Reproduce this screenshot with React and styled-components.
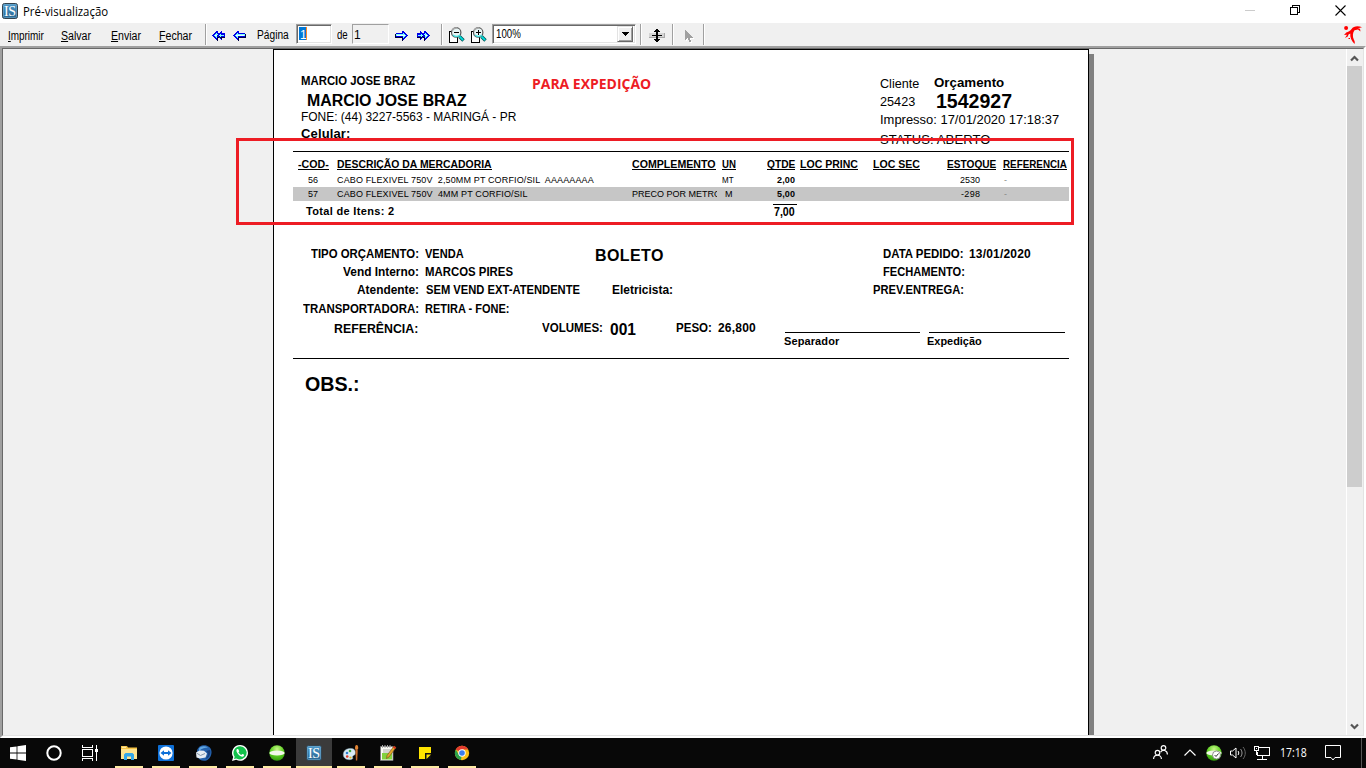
import React from 'react';
import styled, { createGlobalStyle, css } from 'styled-components';

const GlobalStyle = createGlobalStyle`
  * { box-sizing: border-box; }
  body { margin: 0; overflow: hidden; background: #f0f0f0; }
  svg { display: block; flex: none; overflow: visible; }
`;

const ARIAL = '"Liberation Sans", Arial, sans-serif';
const UI = '"Open Sans", "Noto Sans", sans-serif';

/* ---------- text fitted to a printed width ---------- */

const canvas = document.createElement('canvas').getContext('2d');

function measure(text, weight, size, family, width) {
  canvas.font = `${weight} ${size}px ${family}`;
  const m = canvas.measureText(text);
  const ink = m.actualBoundingBoxLeft + m.actualBoundingBoxRight;
  if (text.length < 2) return { marginLeft: `${m.actualBoundingBoxLeft.toFixed(2)}px` };
  if (ink > width) {
    const scale = width / ink;
    return {
      transform: `scaleX(${scale.toFixed(4)})`,
      marginLeft: `${(m.actualBoundingBoxLeft * scale).toFixed(2)}px`,
    };
  }
  return {
    letterSpacing: `${((width - ink) / (text.length - 1)).toFixed(3)}px`,
    marginLeft: `${m.actualBoundingBoxLeft.toFixed(2)}px`,
  };
}

const Label = styled.span`
  display: block;
  flex: none;
  white-space: pre;
  font-family: ${(p) => p.$family};
  font-size: ${(p) => p.$size}px;
  font-weight: ${(p) => p.$weight};
  line-height: ${(p) => p.$line}px;
  height: ${(p) => p.$line}px;
  width: ${(p) => p.$w}px;
  margin-left: ${(p) => p.$ml || 0}px;
  margin-top: ${(p) => p.$mt || 0}px;
  color: ${(p) => p.$color || '#000'};
  ${(p) => p.$clip && css`overflow: hidden; width: ${p.$clip}px;`}
  ${(p) => p.$underline && css`border-bottom: 1px solid #000;`}
`;

const Ink = styled.span`
  display: block;
  width: max-content;
  transform-origin: 0 0;
`;

const Hot = styled.span`
  text-decoration: underline;
  text-underline-offset: 1px;
  text-decoration-thickness: 1px;
`;

function Text({ children, w, size = 12, bold, weight, family = ARIAL, ml, mt, color, clip, underline, hot, line }) {
  const wt = weight || (bold ? 700 : 400);
  const lh = line || Math.round(size * 0.905) + Math.round(size * 0.212);
  return (
    <Label
      $w={w} $size={size} $weight={wt} $family={family} $ml={ml} $mt={mt}
      $line={lh} $color={color} $clip={clip} $underline={underline}
    >
      <Ink style={measure(children, wt, size, family, w)}>
        {hot ? <><Hot>{children[0]}</Hot>{children.slice(1)}</> : children}
      </Ink>
    </Label>
  );
}

/* ---------- window frame ---------- */

const Desktop = styled.div`
  width: 1366px;
  height: 768px;
  display: flex;
  flex-direction: column;
  overflow: hidden;
  background: #f0f0f0;
`;

const TitleBar = styled.header`
  height: 23px;
  flex: none;
  display: flex;
  align-items: flex-start;
  padding: 3px 20px 0 2px;
  background: #fff;
`;

const WindowButtons = styled.div`
  display: flex;
  margin-left: auto;
  gap: 35px;
  padding-top: 2px;
`;

const Toolbar = styled.nav`
  height: 23px;
  flex: none;
  display: flex;
  align-items: flex-start;
  padding: 1px 4px 0 9px;
  background: #f0f0f0;
`;

const Separator = styled.i`
  width: 2px;
  height: 21px;
  flex: none;
  margin-left: ${(p) => p.$ml}px;
  background: linear-gradient(90deg, #a0a0a0 50%, #fff 50%);
`;

const PageInput = styled.div`
  width: 36px;
  height: 20px;
  flex: none;
  margin-left: 7px;
  padding: 1px;
  background: #fff;
  border: 1px solid;
  border-color: #a0a0a0 #fff #fff #a0a0a0;
  box-shadow: inset 1px 1px #696969, inset -1px -1px #e3e3e3;
`;

const Selected = styled.div`
  width: 8px;
  height: 13px;
  display: flex;
  margin: 1px 0 0 1px;
  padding-left: 1px;
  background: #0078d7;
  border-right: 1px solid #ff8728;
`;

const PageTotal = styled.div`
  width: 37px;
  height: 20px;
  flex: none;
  margin-left: 4px;
  padding: 3px 0 0 1px;
  border: 1px solid;
  border-color: #a0a0a0 #fff #fff #a0a0a0;
`;

const Combo = styled.div`
  width: 144px;
  height: 20px;
  flex: none;
  margin-left: 5px;
  display: flex;
  justify-content: space-between;
  padding: 2px 2px 2px 3px;
  background: #fff;
  border: 1px solid;
  border-color: #a0a0a0 #fff #fff #a0a0a0;
  box-shadow: inset 1px 1px #696969, inset -1px -1px #e3e3e3;
`;

const ComboButton = styled.div`
  width: 16px;
  height: 16px;
  margin-top: -1px;
  display: flex;
  align-items: center;
  justify-content: center;
  background: #f0f0f0;
  border: 1px solid;
  border-color: #e3e3e3 #696969 #696969 #e3e3e3;
  box-shadow: inset 1px 1px #fff, inset -1px -1px #a0a0a0;
`;

const Glyph = styled.div`
  flex: none;
  margin-left: ${(p) => p.$ml || 0}px;
  margin-top: ${(p) => p.$mt || 0}px;
`;

const Viewport = styled.main`
  position: relative;
  height: 692px;
  flex: none;
  display: flex;
  border: 2px solid;
  border-color: #a0a0a0 #fff #fff #a0a0a0;
  overflow: hidden;
`;

const Inset = styled.div`
  flex: 1;
  display: flex;
  padding-left: 270px;
  border: 1px solid;
  border-color: #696969 #e3e3e3 #e3e3e3 #696969;
  overflow: hidden;
`;

const Sheet = styled.article`
  width: 816px;
  height: 760px;
  flex: none;
  display: flex;
  flex-direction: column;
  background: #fff;
  border: 1px solid #000;
`;

const SheetShadow = styled.div`
  width: 5px;
  height: 760px;
  margin-top: 5px;
  background: #808080;
`;

const Scrollbar = styled.aside`
  width: 17px;
  flex: none;
  margin-left: auto;
  display: flex;
  flex-direction: column;
  align-items: flex-start;
  padding-top: 6px;
  border-left: 1px solid #fff;
`;

const Thumb = styled.div`
  width: 15px;
  height: 421px;
  margin: 4px 0 236px;
  background: #cdcdcd;
`;

/* ---------- report ---------- */

const Head = styled.section`
  height: 101px;
  flex: none;
  display: flex;
  padding: 24px 0 0 27px;
`;

const Column = styled.div`
  display: flex;
  flex-direction: column;
  width: ${(p) => p.$w}px;
  flex: none;
`;

const Line = styled.div`
  display: flex;
  align-items: flex-start;
  flex: none;
  height: ${(p) => p.$h}px;
`;

const Rule = styled.hr`
  width: 776px;
  height: 1px;
  flex: none;
  margin: 0 0 0 19px;
  border: 0;
  background: #000;
`;

const Table = styled.section`
  width: 776px;
  height: 84px;
  flex: none;
  margin-left: 19px;
  padding-top: 6px;
`;

const TableRow = styled.div`
  display: grid;
  align-items: start;
  grid-template-columns: 39px 295px 90px 45px 33px 73px 74px 56px 66px;
  padding-left: 5px;
  height: ${(p) => p.$h}px;
  padding-top: ${(p) => p.$pt || 0}px;
  background: ${(p) => (p.$shaded ? '#c6c6c6' : 'transparent')};
`;

const Totals = styled.div`
  display: flex;
  align-items: flex-start;
  padding: 3px 0 0 13px;
`;

const Sum = styled.div`
  width: 24px;
  margin-left: 379px;
  padding: 0 0 0 1px;
  border-top: 1px solid #000;
`;

const Details = styled.section`
  height: 122px;
  flex: none;
  padding-top: 11px;
`;

const Signature = styled.div`
  width: ${(p) => p.$w}px;
  margin-left: ${(p) => p.$ml}px;
  margin-top: 11px;
  flex: none;
  border-top: 1px solid #000;
`;

const Highlight = styled.div`
  position: absolute;
  left: 234px;
  top: 90px;
  width: 838px;
  height: 87px;
  border: 3px solid #ed1c24;
`;

/* ---------- taskbar ---------- */

const Taskbar = styled.footer`
  height: 30px;
  flex: none;
  display: flex;
  background: #080808;
`;

const SystemButton = styled.div`
  width: 36px;
  height: 30px;
  display: flex;
  align-items: center;
  justify-content: center;
`;

const AppButton = styled.div`
  width: 37px;
  height: 30px;
  display: flex;
  flex-direction: column;
  justify-content: space-between;
  padding: 7px 0 0 10px;
  ${(p) => p.$first && css`margin-left: 3px; flex: none;`}
  ${(p) => p.$active && css`background: linear-gradient(90deg, #3b3b3b 36px, transparent 36px);`}
`;

const Running = styled.i`
  width: ${(p) => (p.$active ? 36 : 28)}px;
  height: 2px;
  margin-left: ${(p) => (p.$active ? -10 : -6)}px;
  background: #fdeaa3;
`;

const Tray = styled.div`
  display: flex;
  align-items: flex-start;
  margin-left: auto;
  width: 213px;
`;

const ShowDesktop = styled.i`
  width: 1px;
  height: 30px;
  margin-left: 20px;
  background: #555;
`;

/* ---------- drawings ---------- */

const IsIcon = () => (
  <svg width="16" height="16" viewBox="0 0 16 16">
    <defs>
      <linearGradient id="isFill" x1="0" y1="0" x2="0" y2="1">
        <stop offset="0" stopColor="#4f9acb" /><stop offset="1" stopColor="#28648f" />
      </linearGradient>
    </defs>
    <rect x=".5" y=".5" width="15" height="15" rx="2" fill="url(#isFill)" stroke="#34434e" />
    <rect x="1.5" y="1.5" width="13" height="13" rx="1" fill="none" stroke="#6fa9cf" strokeWidth=".6" />
    <text x="8" y="12.6" textAnchor="middle" fontFamily="Liberation Serif, serif" fontSize="14" textLength="12" fill="#fff">IS</text>
  </svg>
);

const Arrow = ({ right, double }) => (
  <svg width="13" height="11" viewBox="0 0 13 11" shapeRendering="crispEdges">
    <g transform={right ? 'translate(13 0) scale(-1 1)' : undefined}>
      <path d="M0 5h1V4h1V3h1V2h1V1h2v2h6v5H6v2H4V9H3V8H2V7H1V6H0z" fill="#0000e8" />
      <path d="M1 6h1v1h1v1h1v1h1v2h1V8h7V4h-1v3H5v2H4V8H3V7H2V6z" fill="#000040" />
      <path d="M2 5h1V4h1V3h1v1h7v2H5v2H4V7H3V6H2z" fill="#7ff" />
      <path d="M3 5h8v1H3z" fill="#eff" />
      {double && (
        <>
          <path d="M5 5h1V4h1V3h1V2h1V1h1v2h3v5h-3v2H9V9H8V8H7V7H6V6H5z" fill="#0000e8" />
          <path d="M6 6h1v1h1v1h1v1h1V8h3V7H9V6z" fill="#000040" />
          <path d="M7 5h1V4h1v1h3v1H9v1H8V6H7z" fill="#7ff" />
        </>
      )}
    </g>
  </svg>
);

const Magnifier = ({ plus }) => (
  <svg width="16" height="16" viewBox="0 0 16 16" shapeRendering="crispEdges">
    <path d="M.5 4.5h8v11h-8z" fill="#fff" stroke="#000" />
    <g shapeRendering="auto">
      <path d="M10.5 9.5l4 4" stroke="#055" strokeWidth="3.4" />
      <path d="M10.5 9.5l3.6 3.6" stroke="#0dd" strokeWidth="1.8" />
      <circle cx="7.2" cy="5.4" r="4.7" fill="#e8f4f4" stroke="#555" strokeWidth="1.2" />
      <path d="M3 4a4.7 4.7 0 0 1 5-3" fill="none" stroke="#aaa" strokeWidth="1.4" />
      <path d="M4 8a4.7 4.7 0 0 0 7 0" fill="none" stroke="#4dd" strokeWidth="1.4" />
    </g>
    <path d="M5 5h5v1H5z" fill="#000" />
    {plus && <path d="M7 3h1v5H7z" fill="#000" />}
  </svg>
);

const FitIcon = () => (
  <svg width="16" height="15" viewBox="0 0 16 15" shapeRendering="crispEdges">
    <path d="M0 5h16v5H0z" fill="#a8a8a8" /><path d="M0 5h15v4H0z" fill="#d4d4d4" />
    <path d="M3 7h10v1H3zM7 1h2v13H7zM6 2h4v1H6zM5 3h6v1H5zM6 12h4v1H6zM5 11h6v1H5z" fill="#000" />
  </svg>
);

const CursorIcon = () => (
  <svg width="9" height="13" viewBox="0 0 9 13" shapeRendering="crispEdges">
    <path d="M1 1v10h1v-1h1V9h1v2h1v2h2v-2H6V9h3V8H8V7H7V6H6V5H5V4H4V3H3V2H2V1z" fill="#fff" />
    <path d="M0 0v10h1V9h1V8h1v2h1v2h2v-2H5V8h3V7H7V6H6V5H5V4H4V3H3V2H2V1H1V0z" fill="#a0a0a0" />
  </svg>
);

const RedLogo = () => (
  <svg width="18" height="18" viewBox="0 0 18 18" fill="#f00">
    <circle cx="2.1" cy="2" r="2" />
    <path d="M18 1.2C14.500-.3 9.500-.3 7.600 3 6.300 5 4.200 6.100 2.300 6.600L0 9l3-.3L1 12l2.800-1.500L4.500 8.600 6.300 7.500C5.800 11 7.500 15 10.500 18c.6-1.500.2-3-.6-4.200C8.300 10.500 8.700 6.500 10.500 4.300L14 3.400 16.500 5.500 16 2.800 14 2.200z" />
    <path d="M4.500 12h1.500v1H4.500z" />
  </svg>
);

const Chevron = ({ down }) => (
  <svg width="9" height="7" viewBox="0 0 9 7">
    <path d={down ? 'M1 1.500l3.500 3.500L8 1.500' : 'M1 5.500L4.500 2 8 5.500'} fill="none" stroke="#555" strokeWidth="2.2" />
  </svg>
);

const StartIcon = () => (
  <svg width="16" height="16" viewBox="0 0 16 16" fill="#fff">
    <path d="M0 2.300L6.600 1.400v6.200H0zM7.400 1.300L16 0v7.600H7.400zM0 8.400h6.600v6.200L0 13.700zM7.400 8.400H16V16l-8.600-1.200z" />
  </svg>
);

const TaskViewIcon = () => (
  <svg width="16" height="16" viewBox="0 0 16 16" fill="none" stroke="#fff" shapeRendering="crispEdges">
    <path d="M.5 4.500h10v7H.5zM.5 0v2.500h10V0M.5 16v-2.500h10V16M14.500 0v16" />
    <path d="M13 4h3v3h-3z" fill="#fff" stroke="none" />
  </svg>
);

const FolderIcon = () => (
  <svg width="16" height="16" viewBox="0 0 16 16">
    <path d="M0 1h6l1 1.500h9V14H0z" fill="#f5c445" />
    <path d="M0 4h16v10H0z" fill="#ffe48f" />
    <path d="M1 1.800h4v1H1z" fill="#fff4c0" />
    <path d="M3 15V9.500L4.500 8h7L13 9.500V15h-3v-3.500H6V15z" fill="#35a8e8" />
  </svg>
);

const TeamViewerIcon = () => (
  <svg width="16" height="16" viewBox="0 0 16 16">
    <rect width="16" height="16" rx="1" fill="#0e70d8" />
    <circle cx="8" cy="8" r="6.600" fill="#fff" />
    <path d="M2.500 8L6 5.200v1.900h4V5.200L13.500 8 10 10.800V8.900H6v1.900z" fill="#0e70d8" />
  </svg>
);

const ThunderbirdIcon = () => (
  <svg width="17" height="16" viewBox="0 0 17 16">
    <path d="M2 6C3 1 8-.5 12 .8c4 1.400 5.500 5.700 4 9.400-1.200 3.400-4 5.800-7 5.600C6 15.800 3.500 14 3 12z" fill="#2462ad" />
    <path d="M4 3.500C6 .8 10 .5 13 2.500 10 2.500 7 3 4 6z" fill="#62a7e2" />
    <path d="M1 7.500l3.500-2 4.500.3 3 2.700-1.500 4-5.500 1-3.500-1z" fill="#e7edf3" />
    <path d="M1.500 8l4 2.500 4.500-2" fill="none" stroke="#8496aa" />
    <path d="M11 6c3 2 2 6-1 8 4-.5 6-5 5-9z" fill="#173f7d" />
  </svg>
);

const WhatsAppIcon = () => (
  <svg width="16" height="16" viewBox="0 0 16 16">
    <path d="M8.100 0A7.900 7.900 0 1 1 4.200 14.800L0 16l1.200-4A7.900 7.900 0 0 1 8.100 0z" fill="#fff" />
    <path d="M8.100 1.300A6.600 6.600 0 1 1 4.400 13.400L2 14l.7-2.300A6.600 6.600 0 0 1 8.100 1.300z" fill="#12c24b" />
    <path d="M5.200 4c-1.300.8-1 2.700.8 4.900 2 2.400 4.400 3.500 5.600 2.300.7-.8.600-1.400.2-1.600l-1.600-.7-.9 1C8 9.500 6.800 8.200 6.400 7.300l.8-.9L6.500 4.500C6.300 4 5.800 3.800 5.200 4z" fill="#fff" />
  </svg>
);

const GreenBall = ({ check }) => (
  <svg width="16" height="16" viewBox="0 0 16 16">
    <defs>
      <radialGradient id="ball" cx=".5" cy=".25" r=".8">
        <stop offset="0" stopColor="#c8f58a" /><stop offset=".5" stopColor="#5fd222" /><stop offset="1" stopColor="#2c9308" />
      </radialGradient>
    </defs>
    <circle cx="8" cy="8" r="7.700" fill="url(#ball)" />
    <ellipse cx="8" cy="8" rx="7.600" ry="2.500" fill="#f2f8e8" />
    {check && (
      <>
        <circle cx="10.500" cy="10" r="4" fill="#fff" stroke="#777" strokeWidth=".8" />
        <path d="M8.600 10l1.400 1.500 2.500-3" stroke="#333" fill="none" />
      </>
    )}
  </svg>
);

const PaintIcon = () => (
  <svg width="16" height="16" viewBox="0 0 16 16">
    <path d="M.3 9.500C.3 5 4.500 3 8.500 3.500c4 .5 4.500 4 3.500 6-.6 1.200-2 .6-2.300 1.800-.4 2 1.200 2.500-1.700 3.200C4 15.300.3 13.500.3 9.500z" fill="#d9ecf6" stroke="#8aaabb" strokeWidth=".5" />
    <circle cx="4" cy="8" r="1.300" fill="#2f7fd0" /><circle cx="7" cy="6" r="1.300" fill="#42a93b" />
    <circle cx="4.200" cy="11.500" r="1.300" fill="#e03b2c" /><circle cx="7.500" cy="12.500" r="1.100" fill="#e8b91c" />
    <path d="M13.500 0c1.500 0 2 2 1.600 4h-3C11.900 2 12.300 0 13.500 0z" fill="#e08434" />
    <path d="M12.400 4h2.300v3l-.5 8.500h-1.300z" fill="#c46a28" />
  </svg>
);

const NotepadIcon = () => (
  <svg width="16" height="16" viewBox="0 0 16 16">
    <path d="M.5 1.500h12.500v14H.5z" fill="#fafaf4" stroke="#777" strokeWidth=".8" />
    <path d="M2 8h10v6.500H2z" fill="#83d23e" />
    <path d="M3 5h8M3 7h7" stroke="#999" strokeWidth=".8" />
    <path d="M2.500 0v3M5 0v3M7.500 0v3M10 0v3" stroke="#aaa" />
    <path d="M14 1l2 1.500-7 9.500-2.500 1.500.5-3z" fill="#e4a72c" stroke="#73471a" strokeWidth=".6" />
    <path d="M14 1l2 1.500-1 1.400-2-1.500z" fill="#d42a1e" />
  </svg>
);

const StickyIcon = () => (
  <svg width="16" height="16" viewBox="0 0 16 16">
    <path d="M2 2h12v12H2z" fill="#ffe400" /><path d="M8 8h6v6H8z" fill="#111" />
    <path d="M9.500 9.500H14L9.500 14z" fill="#ffe400" />
  </svg>
);

const ChromeIcon = () => (
  <svg width="16" height="16" viewBox="0 0 16 16">
    <circle cx="8" cy="8" r="7.200" fill="#fbc116" />
    <path d="M8 8L1.800 4.400A7.200 7.200 0 0 1 14.200 4.400H8z" fill="#e33b2e" />
    <path d="M8 8l-1 7.100A7.200 7.200 0 0 1 1.800 4.400L5 10z" fill="#2ba24c" />
    <circle cx="8" cy="8" r="3.700" fill="#fff" /><circle cx="8" cy="8" r="2.800" fill="#3b7ded" />
  </svg>
);

const PeopleIcon = () => (
  <svg width="15" height="15" viewBox="0 0 15 15" fill="none" stroke="#fff" strokeWidth="1.200">
    <circle cx="10.500" cy="2.900" r="2.300" /><circle cx="4.500" cy="7.700" r="2.300" />
    <path d="M.6 14c0-5 7.800-5 7.800 0M7.600 7.100C9.500 4 14.400 5.200 14.400 9.500" />
  </svg>
);

const SpeakerIcon = () => (
  <svg width="16" height="14" viewBox="0 0 16 14" fill="none" stroke="#fff">
    <path d="M.5 5h2L6 2v10L2.500 9h-2z" /><path d="M8 5c1 1.200 1 2.800 0 4" />
    <path d="M10.500 3c2 2.400 2 5.600 0 8" stroke="#999" /><path d="M13 1c3 3.500 3 8.500 0 12" stroke="#666" />
  </svg>
);

const NetworkIcon = () => (
  <svg width="16" height="14" viewBox="0 0 16 14" fill="none" stroke="#fff" shapeRendering="crispEdges">
    <path d="M5 1.500h10.500v8h-12V6M8.500 10v3M3 13.500h10M.5.500h4v4h-4zM2.500 5v4" />
    <path d="M2 2h1v1H2z" fill="#fff" stroke="none" />
  </svg>
);

/* ---------- data ---------- */

const headers = [
  ['-COD-', 31], ['DESCRIÇÃO DA MERCADORIA', 155], ['COMPLEMENTO', 84], ['UN', 14], ['QTDE', 28],
  ['LOC PRINC', 58], ['LOC SEC', 47], ['ESTOQUE', 49], ['REFERENCIA', 64],
];

const apps = [FolderIcon, TeamViewerIcon, ThunderbirdIcon, WhatsAppIcon, GreenBall, IsIcon, PaintIcon, NotepadIcon, StickyIcon, ChromeIcon];

export default function App() {
  return (
    <Desktop>
      <GlobalStyle />
      <TitleBar>
        <IsIcon />
        <Text family={UI} size={12} w={84} ml={6} line={16} mt={1}>Pré-visualização</Text>
        <WindowButtons>
          <svg width="10" height="11" viewBox="0 0 10 11"><path d="M0 5.500h10" stroke="#ccc" /></svg>
          <svg width="10" height="10" viewBox="0 0 10 10" fill="none" stroke="#000" shapeRendering="crispEdges">
            <path d="M.5 2.500h7v7h-7zM2.500 2V.5h7v7H8" />
          </svg>
          <svg width="11" height="11" viewBox="0 0 11 11"><path d="M.5.500l10 10M10.500.500l-10 10" stroke="#000" strokeWidth="1.100" /></svg>
        </WindowButtons>
      </TitleBar>

      <Toolbar>
        <Text hot w={35} mt={5}>Imprimir</Text>
        <Text hot w={30} ml={17} mt={5}>Salvar</Text>
        <Text hot w={30} ml={20} mt={5}>Enviar</Text>
        <Text hot w={33} ml={18} mt={5}>Fechar</Text>
        <Separator $ml={13} />
        <Glyph $ml={5} $mt={6}><Arrow double /></Glyph>
        <Glyph $ml={8} $mt={6}><Arrow /></Glyph>
        <Text w={32} ml={11} mt={4}>Página</Text>
        <PageInput><Selected><Text w={3} color="#fff" mt={1}>1</Text></Selected></PageInput>
        <Text w={11} ml={5} mt={4}>de</Text>
        <PageTotal><Text w={3}>1</Text></PageTotal>
        <Glyph $ml={6} $mt={6}><Arrow right /></Glyph>
        <Glyph $ml={9} $mt={6}><Arrow right double /></Glyph>
        <Separator $ml={11} />
        <Glyph $ml={6} $mt={3}><Magnifier /></Glyph>
        <Glyph $ml={6} $mt={3}><Magnifier plus /></Glyph>
        <Combo>
          <Text w={25}>100%</Text>
          <ComboButton>
            <svg width="7" height="4" viewBox="0 0 7 4" shapeRendering="crispEdges"><path d="M0 0h7v1H6v1H5v1H4v1H3V3H2V2H1V1H0z" /></svg>
          </ComboButton>
        </Combo>
        <Separator $ml={4} />
        <Glyph $ml={7} $mt={4}><FitIcon /></Glyph>
        <Separator $ml={7} />
        <Glyph $ml={11} $mt={6}><CursorIcon /></Glyph>
        <Separator $ml={9} />
        <Glyph $ml={639} $mt={2}><RedLogo /></Glyph>
      </Toolbar>

      <Viewport>
        <Inset>
          <Sheet>
            <Head>
              <Column $w={231}>
                <Text bold w={114}>MARCIO JOSE BRAZ</Text>
                <Text bold size={16} w={159} ml={7} mt={4}>MARCIO JOSE BRAZ</Text>
                <Text size={13} w={214} ml={1}>FONE: (44) 3227-5563 - MARINGÁ - PR</Text>
                <Text bold size={13} w={49} mt={2}>Celular:</Text>
              </Column>
              <Column $w={348}>
                <Text weight={700} family={UI} size={14} line={18} w={118} ml={1} mt={1} color="#ed1c24">PARA EXPEDIÇÃO</Text>
              </Column>
              <Column $w={190}>
                <Line $h={16}>
                  <Text size={13} w={39} mt={2}>Cliente</Text>
                  <Text bold size={13.5} w={70} ml={15} mt={1}>Orçamento</Text>
                </Line>
                <Line $h={22}>
                  <Text size={13} w={35} mt={4}>25423</Text>
                  <Text bold size={20} w={75} ml={22}>1542927</Text>
                </Line>
                <Text size={13} w={178} ml={1}>Impresso: 17/01/2020 17:18:37</Text>
                <Text size={13} w={111} mt={5}>STATUS: ABERTO</Text>
              </Column>
            </Head>
            <Rule />
            <Table>
              <TableRow $h={16}>
                {headers.map(([name, w]) => <Text key={name} bold size={11} w={w} underline line={12}>{name}</Text>)}
              </TableRow>
              <TableRow $h={13} $pt={1}>
                <Text size={9} w={10} ml={10}>56</Text>
                <Text size={9} w={258}>{'CABO FLEXIVEL 750V  2,50MM PT CORFIO/SIL  AAAAAAAA'}</Text>
                <i />
                <Text size={9} w={12}>MT</Text>
                <Text bold size={9} w={18} ml={10}>2,00</Text>
                <i /><i />
                <Text size={9} w={20} ml={13}>2530</Text>
                <Text size={9} w={2} ml={1} color="#888">-</Text>
              </TableRow>
              <TableRow $h={14} $pt={2} $shaded>
                <Text size={9} w={10} ml={10}>57</Text>
                <Text size={9} w={191}>{'CABO FLEXIVEL 750V  4MM PT CORFIO/SIL'}</Text>
                <Text size={9} w={89} clip={85}>PRECO POR METRO</Text>
                <Text size={9} w={6} ml={3}>M</Text>
                <Text bold size={9} w={18} ml={10}>5,00</Text>
                <i /><i />
                <Text size={9} w={19} ml={14}>-298</Text>
                <Text size={9} w={2} ml={1} color="#888">-</Text>
              </TableRow>
              <Totals>
                <Text bold size={11} w={88} mt={1}>Total de Itens: 2</Text>
                <Sum><Text bold size={12} w={21}>7,00</Text></Sum>
              </Totals>
            </Table>
            <Details>
              <Line $h={18}>
                <Text bold w={107} ml={37}>TIPO ORÇAMENTO:</Text>
                <Text bold w={39} ml={7}>VENDA</Text>
                <Text bold size={16} w={67} ml={132}>BOLETO</Text>
                <Text bold w={80} ml={220}>DATA PEDIDO:</Text>
                <Text bold w={62} ml={6}>13/01/2020</Text>
              </Line>
              <Line $h={18}>
                <Text bold w={75} ml={69}>Vend Interno:</Text>
                <Text bold w={88} ml={7}>MARCOS PIRES</Text>
                <Text bold w={81} ml={370}>FECHAMENTO:</Text>
              </Line>
              <Line $h={19}>
                <Text bold w={61} ml={83}>Atendente:</Text>
                <Text bold w={154} ml={8}>SEM VEND EXT-ATENDENTE</Text>
                <Text bold w={60} ml={32}>Eletricista:</Text>
                <Text bold w={90} ml={201}>PREV.ENTREGA:</Text>
              </Line>
              <Line $h={19}>
                <Text bold w={115} ml={29}>TRANSPORTADORA:</Text>
                <Text bold w={84} ml={7}>RETIRA - FONE:</Text>
              </Line>
              <Line $h={20}>
                <Text bold size={13} w={84} ml={60}>REFERÊNCIA:</Text>
                <Text bold w={60} ml={124}>VOLUMES:</Text>
                <Text bold size={16} w={26} ml={8}>001</Text>
                <Text bold w={35} ml={40}>PESO:</Text>
                <Text bold w={38} ml={7}>26,800</Text>
                <Signature $w={135} $ml={29}><Text bold size={11} w={56} ml={-1} mt={2}>Separador</Text></Signature>
                <Signature $w={136} $ml={9}><Text bold size={11} w={55} ml={-2} mt={2}>Expedição</Text></Signature>
              </Line>
            </Details>
            <Rule />
            <Text bold size={20} w={53} ml={31} mt={14}>OBS.:</Text>
          </Sheet>
          <SheetShadow />
          <Scrollbar>
            <Glyph $ml={3}><Chevron /></Glyph>
            <Thumb />
            <Glyph $ml={3}><Chevron down /></Glyph>
          </Scrollbar>
        </Inset>
        <Highlight />
      </Viewport>

      <Taskbar>
        <SystemButton><StartIcon /></SystemButton>
        <SystemButton><svg width="16" height="16" viewBox="0 0 16 16"><circle cx="8" cy="8" r="6.700" fill="none" stroke="#fff" strokeWidth="2" /></svg></SystemButton>
        <SystemButton><TaskViewIcon /></SystemButton>
        {apps.map((Icon, i) => (
          <AppButton key={i} $first={i === 0} $active={i === 5}>
            <Icon />
            <Running $active={i === 5} />
          </AppButton>
        ))}
        <Tray>
          <Glyph $mt={7}><PeopleIcon /></Glyph>
          <Glyph $ml={16} $mt={11}>
            <svg width="12" height="7" viewBox="0 0 12 7"><path d="M.5 6.500L6 1l5.500 5.500" fill="none" stroke="#fff" strokeWidth="1.200" /></svg>
          </Glyph>
          <Glyph $ml={10} $mt={7}><GreenBall check /></Glyph>
          <Glyph $ml={8} $mt={8}><SpeakerIcon /></Glyph>
          <Glyph $ml={8} $mt={8}><NetworkIcon /></Glyph>
          <Text family={UI} size={12} line={16} w={26} ml={11} mt={7} color="#fff">17:18</Text>
          <Glyph $ml={18} $mt={7}>
            <svg width="16" height="16" viewBox="0 0 16 16"><path d="M.5.500h15v12H10L8 15l-2-2.500H.5z" fill="none" stroke="#fff" /></svg>
          </Glyph>
          <ShowDesktop />
        </Tray>
      </Taskbar>
    </Desktop>
  );
}
